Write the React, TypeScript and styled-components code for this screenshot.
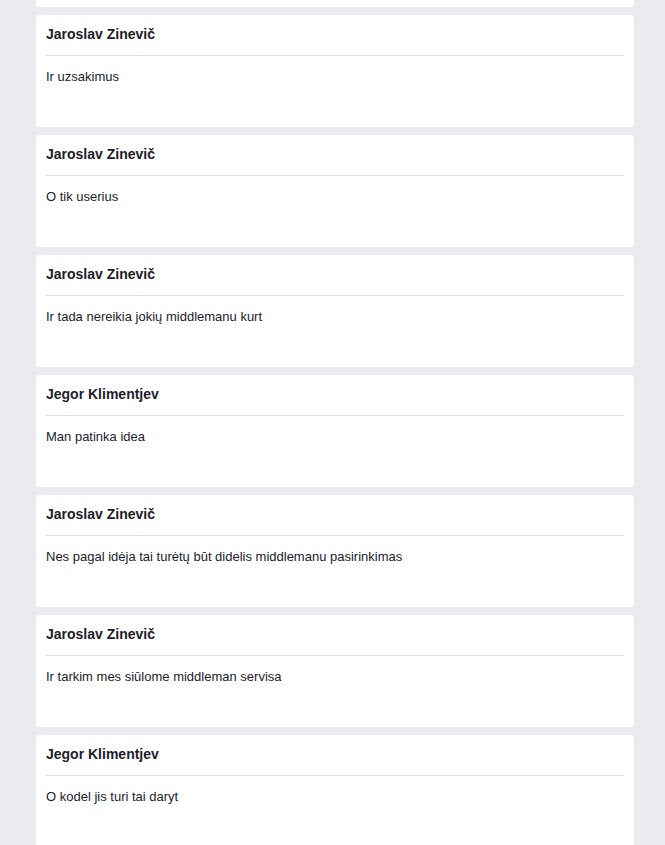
import React from "react";
import styled, { createGlobalStyle } from "styled-components";

const Global = createGlobalStyle`
  html, body {
    margin: 0;
    padding: 0;
    background: #e9ebee;
    font-family: "Liberation Sans", Arial, sans-serif;
    color: #1d2129;
  }
  #root { min-height: 845px; }
`;

const Page = styled.div`
  height: 845px;
  overflow: hidden;
  background: #e9ebee;
`;

const Feed = styled.div`
  width: 598px;
  margin-left: 36px;
  display: flex;
  flex-direction: column;
  gap: 8px;
`;

/* bottom edge of the previous message card, scrolled mostly out of view */
const CardTail = styled.div`
  height: 7px;
  background: #ffffff;
  border-radius: 0 0 4px 4px;
`;

const Card = styled.div`
  box-sizing: border-box;
  height: 112px;
  background: #ffffff;
  border-radius: 4px;
  padding: 11px 10px 0 10px;
`;

const Author = styled.div`
  font-size: 14px;
  font-weight: bold;
  line-height: 16px;
  color: #1d2129;
  padding-bottom: 13px;
  border-bottom: 1px solid #dadde1;
`;

const Message = styled.div`
  margin-top: 13px;
  font-size: 13px;
  line-height: 16px;
  color: #1d2129;
`;

const messages: { author: string; text: string }[] = [
  { author: "Jaroslav Zinevič", text: "Ir uzsakimus" },
  { author: "Jaroslav Zinevič", text: "O tik userius" },
  { author: "Jaroslav Zinevič", text: "Ir tada nereikia jokių middlemanu kurt" },
  { author: "Jegor Klimentjev", text: "Man patinka idea" },
  { author: "Jaroslav Zinevič", text: "Nes pagal idėja tai turėtų būt didelis middlemanu pasirinkimas" },
  { author: "Jaroslav Zinevič", text: "Ir tarkim mes siūlome middleman servisa" },
  { author: "Jegor Klimentjev", text: "O kodel jis turi tai daryt" },
];

export default function App() {
  return (
    <Page>
      <Global />
      <Feed>
        <CardTail />
        {messages.map((m, i) => (
          <Card key={i}>
            <Author>{m.author}</Author>
            <Message>{m.text}</Message>
          </Card>
        ))}
      </Feed>
    </Page>
  );
}
